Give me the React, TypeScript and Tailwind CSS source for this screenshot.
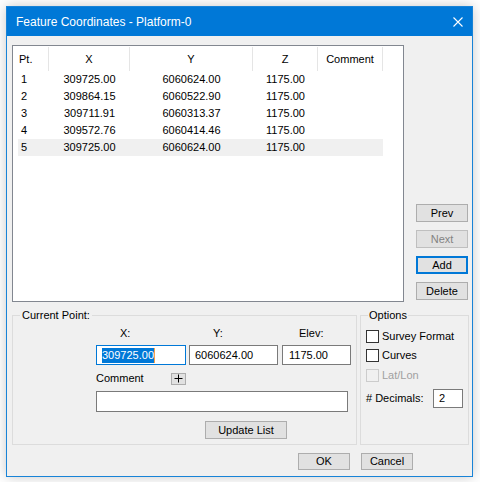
import type { ReactNode } from 'react'

const rows = [
  { pt: '1', x: '309725.00', y: '6060624.00', z: '1175.00' },
  { pt: '2', x: '309864.15', y: '6060522.90', z: '1175.00' },
  { pt: '3', x: '309711.91', y: '6060313.37', z: '1175.00' },
  { pt: '4', x: '309572.76', y: '6060414.46', z: '1175.00' },
  { pt: '5', x: '309725.00', y: '6060624.00', z: '1175.00' },
]

function Btn({
  children,
  className = 'w-[52px] h-[18px]',
  disabled = false,
  focused = false,
}: {
  children: ReactNode
  className?: string
  disabled?: boolean
  focused?: boolean
}) {
  return (
    <div
      className={`flex items-center justify-center bg-[#e1e1e1] ${
        focused ? 'border-2 border-[#0078d7]' : disabled ? 'border border-[#bfbfbf] bg-[#cccccc]' : 'border border-[#adadad]'
      } ${disabled ? 'text-[#838383]' : 'text-black'} ${className}`}
    >
      {children}
    </div>
  )
}

function Check({ label, disabled = false }: { label: string; disabled?: boolean }) {
  return (
    <div className="flex items-center h-[13px]">
      <div
        className={`w-[13px] h-[13px] border ${disabled ? 'border-[#cccccc] bg-[#f0f0f0]' : 'border-[#333333] bg-white'}`}
      />
      <span className={`ml-[3px] ${disabled ? 'text-[#a0a0a0]' : 'text-black'}`}>{label}</span>
    </div>
  )
}

export default function App() {
  return (
    <div
      className="w-[480px] h-[482px] bg-white pt-[6px] pl-[6px] text-[11px] leading-[13px] text-black"
      style={{ fontFamily: '"Liberation Sans", Arial, sans-serif' }}
    >
      <div className="w-[467px] h-[471px] border border-[#1883d7] bg-[#f0f0f0] flex flex-col shadow-[0_0_12px_rgba(0,0,0,0.22)]">
        {/* title bar */}
        <div className="h-[29px] bg-[#0078d7] flex items-center pl-[9px] pr-[9px] shrink-0">
          <span className="text-white text-[12px] leading-[14px] mt-[1px]">Feature Coordinates - Platform-0</span>
          <svg className="ml-auto" width="10" height="10" viewBox="0 0 10 10">
            <path d="M0.5 0.5 L9.5 9.5 M9.5 0.5 L0.5 9.5" stroke="white" strokeWidth="1.1" />
          </svg>
        </div>

        {/* list + side buttons */}
        <div className="flex pt-[9px] pl-[5px]">
          <div className="w-[392px] h-[257px] border border-[#828790] bg-white">
            <div className="flex h-[25px]">
              <div className="w-[36px] pl-[6px] flex items-center border-r border-[#e5e5e5] mt-[1px]">Pt.</div>
              <div className="w-[81px] flex items-center justify-center border-r border-[#e5e5e5] mt-[1px]">X</div>
              <div className="w-[123px] flex items-center justify-center border-r border-[#e5e5e5] mt-[1px]">Y</div>
              <div className="w-[65px] flex items-center justify-center border-r border-[#e5e5e5] mt-[1px]">Z</div>
              <div className="w-[65px] flex items-center justify-center border-r border-[#e5e5e5] mt-[1px]">Comment</div>
            </div>
            {rows.map((r, i) => (
              <div
                key={i}
                className={`flex h-[17px] items-center ml-[5px] w-[365px] ${i === 4 ? 'bg-[#f0f0f0]' : ''}`}
              >
                <div className="w-[31px] pl-[3px]">{r.pt}</div>
                <div className="w-[81px] text-center">{r.x}</div>
                <div className="w-[123px] text-center">{r.y}</div>
                <div className="w-[65px] text-center">{r.z}</div>
                <div className="w-[65px]" />
              </div>
            ))}
          </div>
          <div className="ml-[12px] flex flex-col justify-end gap-[8px] pb-[2px]">
            <Btn>Prev</Btn>
            <Btn disabled>Next</Btn>
            <Btn focused>Add</Btn>
            <Btn>Delete</Btn>
          </div>
        </div>

        {/* group boxes */}
        <div className="flex pl-[5px] mt-[7px]">
          <fieldset className="w-[345px] h-[136px] border border-[#dcdcdc] px-0 pb-0">
            <legend className="ml-[7px] px-[2px] leading-[13px]">Current Point:</legend>
            <div className="pl-[83px] pt-[5px] flex flex-col">
              <div className="flex h-[13px]">
                <span className="w-[93px] pl-[24px]">X:</span>
                <span className="w-[93px] pl-[24px]">Y:</span>
                <span className="pl-[17px]">Elev:</span>
              </div>
              <div className="flex mt-[5px] h-[20px]">
                <div className="w-[90px] border border-[#0078d7] bg-white flex items-center pl-[5px]">
                  <span className="bg-[#0078d7] text-white leading-[15px] border-r border-[#f7a24b]">309725.00</span>
                </div>
                <div className="w-[89px] ml-[3px] border border-[#7a7a7a] bg-white flex items-center pl-[5px]">6060624.00</div>
                <div className="w-[69px] ml-[4px] border border-[#7a7a7a] bg-white flex items-center pl-[6px]">1175.00</div>
              </div>
              <div className="flex w-[90px] justify-between items-center mt-[7px] h-[13px]">
                <span>Comment</span>
                <div className="w-[15px] h-[12px] bg-[#e1e1e1] border border-[#adadad] flex items-center justify-center">
                  <svg width="9" height="9" viewBox="0 0 9 9">
                    <path d="M4.5 0.5 V8.5 M0.5 4.5 H8.5" stroke="black" strokeWidth="1" />
                  </svg>
                </div>
              </div>
              <div className="w-[252px] h-[21px] mt-[6px] border border-[#7a7a7a] bg-white" />
              <Btn className="w-[82px] h-[18px] mt-[9px] ml-[109px]">Update List</Btn>
            </div>
          </fieldset>
          <fieldset className="w-[109px] h-[136px] ml-[3px] border border-[#dcdcdc] px-0 pb-0">
            <legend className="ml-[7px] px-[1px] leading-[13px]">Options</legend>
            <div className="pl-[5px] pt-[8px] flex flex-col">
              <Check label="Survey Format" />
              <div className="mt-[6px]">
                <Check label="Curves" />
              </div>
              <div className="mt-[7px]">
                <Check label="Lat/Lon" disabled />
              </div>
              <div className="flex items-center mt-[7px] h-[19px]">
                <span>&#35; Decimals:</span>
                <div className="ml-auto mr-[5px] w-[30px] h-[19px] border border-[#7a7a7a] bg-white flex items-center pl-[5px]">2</div>
              </div>
            </div>
          </fieldset>
        </div>

        {/* OK / Cancel */}
        <div className="flex mt-[8px] pl-[291px] gap-[11px]">
          <Btn className="w-[52px] h-[17px]">OK</Btn>
          <Btn className="w-[52px] h-[17px]">Cancel</Btn>
        </div>
      </div>
    </div>
  )
}
